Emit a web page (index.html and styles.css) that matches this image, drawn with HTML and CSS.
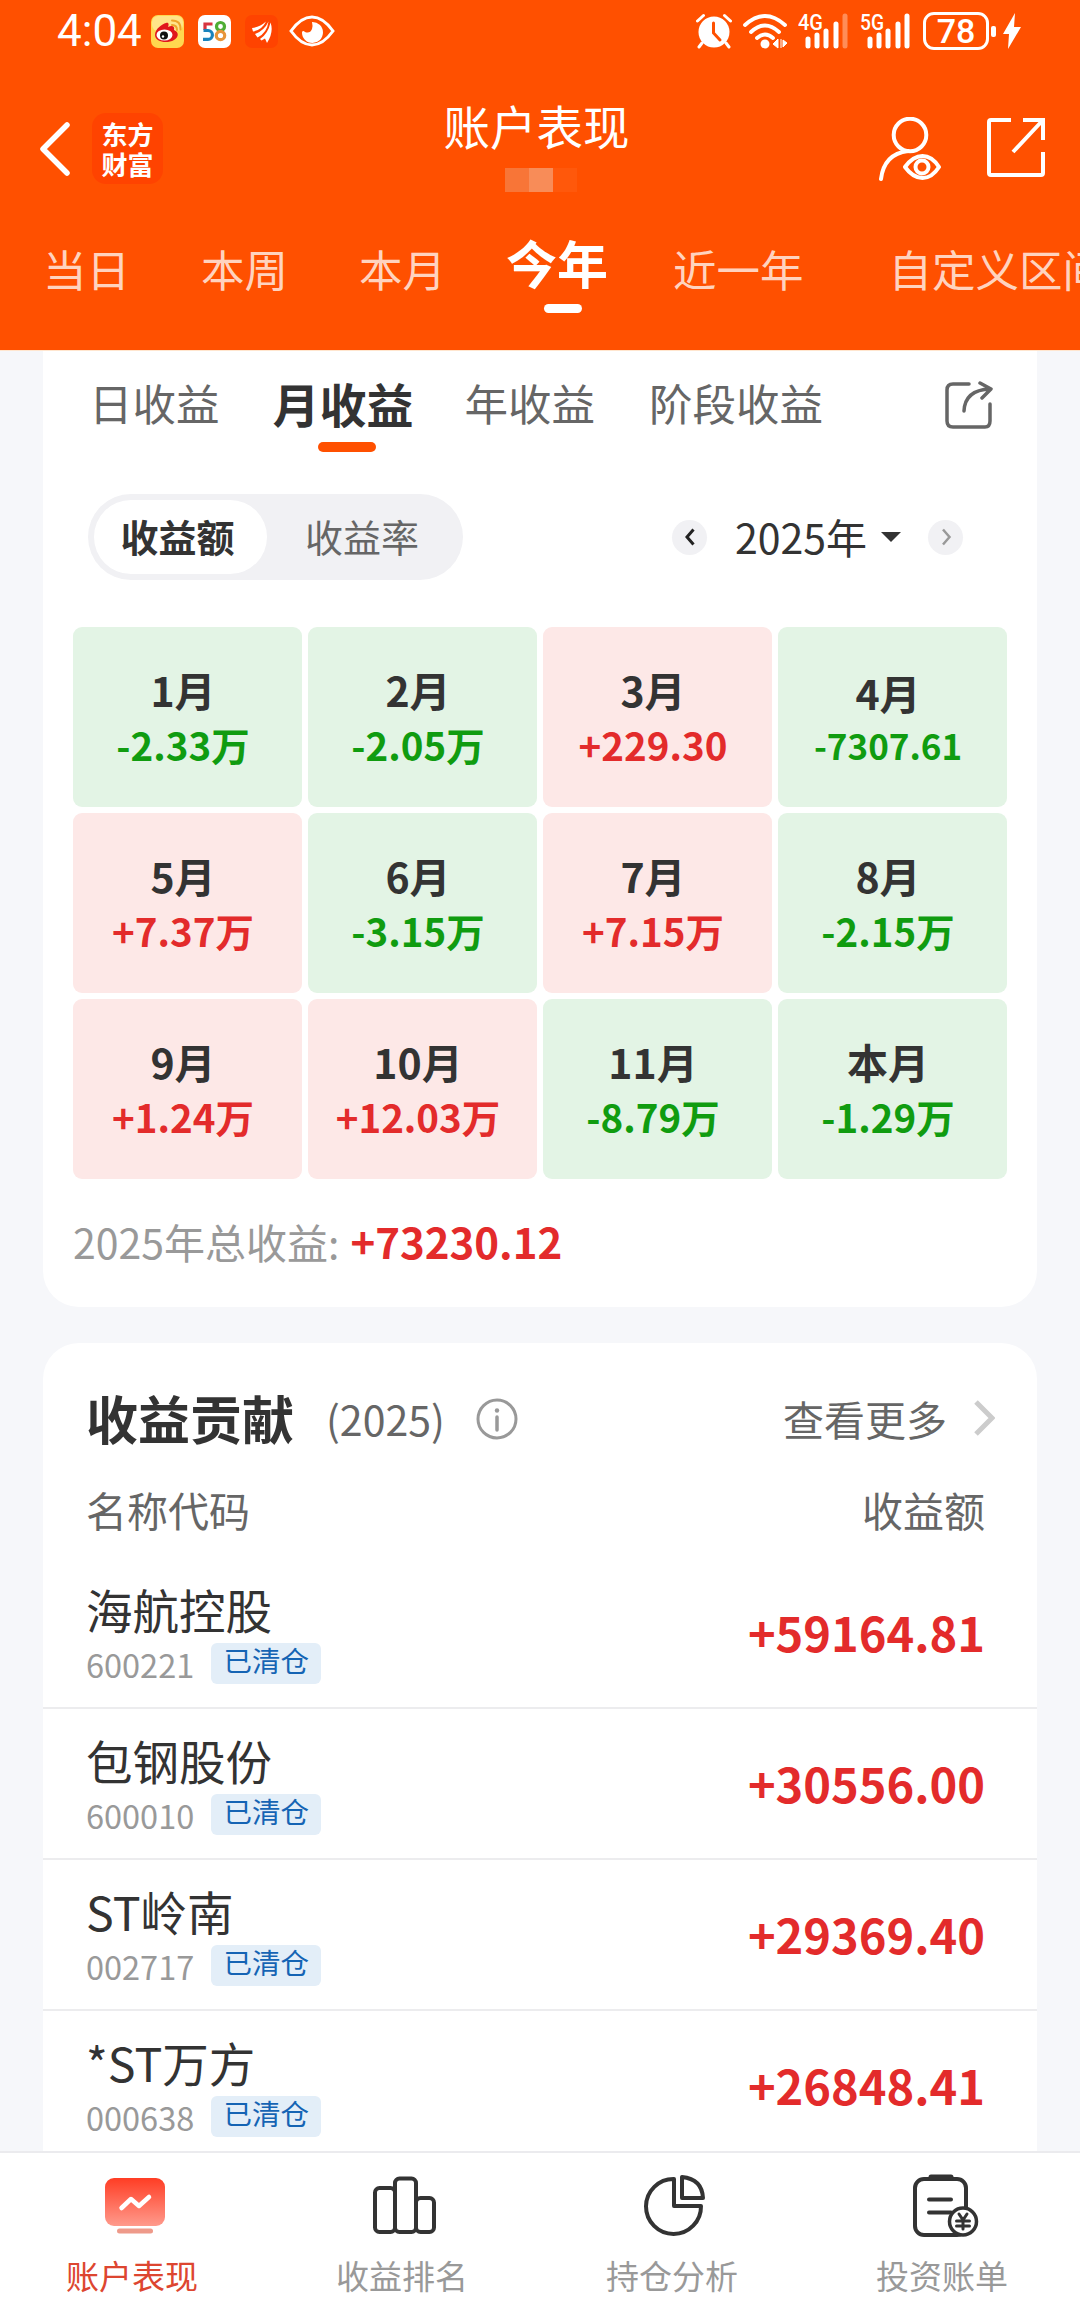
FILE: index.html
```html
<!DOCTYPE html>
<html lang="zh-CN">
<head>
  <meta charset="UTF-8" />
  <meta name="viewport" content="width=device-width, initial-scale=1.0"/>
  <title>账户表现</title>
  <link rel="stylesheet" href="styles.css">
</head>
<body>

  <!-- Header -->
  <header class="header">
    <div class="status-bar">
      <span class="time">4:04</span>
      <svg class="app-icon" viewBox="0 0 33 33" width="33" height="33">
        <rect width="33" height="33" rx="7" fill="#ffd84f"/>
        <rect x="1" y="1" width="31" height="15" rx="6" fill="#ffe48a"/>
        <path d="M4 20C4 14 11 9 15 8c3-1 3 2 2 4 4-2 7-1 6 3 5 2 5 7 0 10-7 4-19 2-19-5z" fill="#e0161c"/>
        <ellipse cx="13.500" cy="20" rx="8" ry="5.500" fill="#fff"/>
        <circle cx="13" cy="20.500" r="4" fill="#111"/>
        <circle cx="12" cy="21.500" r="1.200" fill="#fff"/>
        <path d="M21 10q5 0 5 5M21 5.500q9 0 8.500 9" fill="none" stroke="#efa52a" stroke-width="2" stroke-linecap="round"/>
      </svg>
      <svg class="app-icon" viewBox="0 0 33 33" width="33" height="33">
        <rect width="33" height="33" rx="7" fill="#fff"/>
        <path d="M14.500 9H7v6" fill="none" stroke="#d8343f" stroke-width="3.200"/>
        <path d="M5.500 15.500H10a4 4 0 0 1 0 8.800H5" fill="none" stroke="#1a83bd" stroke-width="3.200"/>
        <circle cx="22.500" cy="11.500" r="4" fill="none" stroke="#4fae35" stroke-width="3.200"/>
        <circle cx="22.500" cy="20.500" r="4.200" fill="none" stroke="#e8953a" stroke-width="3.200"/>
      </svg>
      <svg class="app-icon" viewBox="0 0 33 33" width="33" height="33">
        <rect width="33" height="33" rx="7" fill="#ff4300"/>
        <path d="M7 13Q15 12 21 6.500Q17 15 8 16.500zM10 19Q19 16 23.500 6.500Q22 18 12.500 22.500zM15 24Q23 19 25.500 7.500Q29 17 22 28l-2-4.500-3.500 2z" fill="#fff"/>
      </svg>
      <svg class="eye-icon" viewBox="0 0 46 32" width="46" height="32">
        <path d="M2 16Q12 2 23 2t21 14Q34 30 23 30T2 16z" fill="none" stroke="#fff" stroke-width="3"/>
        <path d="M23 7a10.500 10.500 0 1 1-10 10q1-2 3 0 5 2 7-3 1-3 0-7z" fill="#fff"/>
      </svg>
      <div class="status-right">
        <svg viewBox="0 0 36 36" width="36" height="36">
          <circle cx="18" cy="19" r="15.500" fill="#fff"/>
          <path d="M1.500 8l6-5.500M34.500 8l-6-5.500M6 30l-3 4M30 30l3 4" stroke="#fff" stroke-width="3" stroke-linecap="round"/>
          <path d="M17.500 10v10l6.500 7" fill="none" stroke="#ff5000" stroke-width="3" stroke-linecap="round"/>
        </svg>
        <svg class="wifi" viewBox="0 0 46 36" width="46" height="36">
          <g fill="none" stroke="#fff" stroke-width="3.800" stroke-linecap="round">
            <path d="M3 12Q23-6 43 12M9 19Q23 6 37 19M15 25Q23 18 31 25"/>
          </g>
          <circle cx="23" cy="31" r="4.500" fill="#fff"/>
          <path d="M36 26v9l-5-4zM39 26v9M41 27v7l4-4z" fill="#fff" stroke="#fff"/>
        </svg>
        <svg class="signal" viewBox="0 -8 52 52" width="52" height="52">
          <text x="0" y="17" font-size="22" textLength="25" lengthAdjust="spacingAndGlyphs">4G</text>
          <path d="M10 26v7M19 22v11M28 18v15M38 11v22" stroke="#fff" stroke-width="5" stroke-linecap="round"/>
          <path d="M47 3v30" stroke="#ff8d58" stroke-width="5" stroke-linecap="round"/>
        </svg>
        <svg class="signal" viewBox="0 -8 52 52" width="52" height="52">
          <text x="0" y="17" font-size="22" textLength="24" lengthAdjust="spacingAndGlyphs">5G</text>
          <path d="M10 26v7M19 22v11M28 18v15M38 11v22M47 3v30" stroke="#fff" stroke-width="5" stroke-linecap="round"/>
        </svg>
        <span class="battery">78</span>
        <span class="battery-tip"></span>
        <svg viewBox="0 0 18 36" width="18" height="36"><path d="M12 0L0 21h6L5 36 18 14h-7z" fill="#fff"/></svg>
      </div>
    </div>

    <div class="nav-bar">
      <div class="nav-left">
        <svg viewBox="0 0 30 54" width="30" height="54"><path d="M27 3L3 27l24 24" fill="none" stroke="#fff" stroke-width="5.500" stroke-linecap="round" stroke-linejoin="round"/></svg>
        <div class="logo"><span>东方</span><span>财富</span></div>
      </div>
      <div class="nav-title">
        <h1>账户表现</h1>
        <div class="mosaic"><i></i><i></i><i></i></div>
      </div>
      <div class="nav-right">
        <svg viewBox="0 0 62 64" width="62" height="64" fill="none" stroke="#fff" stroke-width="4">
          <circle cx="31" cy="18" r="16.300"/>
          <path d="M2 62Q5 37 29 34" stroke-linecap="round"/>
          <path d="M26 50Q34 39 43.500 39T60 50Q53 61 43.500 61T26 50z" stroke-linejoin="round"/>
          <circle cx="43" cy="50" r="6.500"/>
        </svg>
        <svg viewBox="0 0 58 60" width="58" height="60" fill="none" stroke="#fff" stroke-width="4">
          <path d="M24 3H4q-2 0-2 2v51q0 2 2 2h50q2 0 2-2V35M36 3h20v20M56 3L26 35"/>
        </svg>
      </div>
    </div>

    <nav class="range-tabs">
      <span>当日</span>
      <span>本周</span>
      <span>本月</span>
      <span class="active">今年</span>
      <span>近一年</span>
      <span>自定义区间</span>
    </nav>
  </header>

  <main class="content">
    <!-- Profit calendar -->
    <section class="card calendar">
      <div class="profit-tabs">
        <span>日收益</span>
        <span class="active">月收益</span>
        <span>年收益</span>
        <span>阶段收益</span>
        <svg viewBox="0 0 48 48" width="48" height="48" fill="none" stroke="#666" stroke-width="3.500" stroke-linecap="round" stroke-linejoin="round">
          <path d="M24 3H8Q2 3 2 9v31q0 6 6 6h32q5 0 5-6V23"/>
          <path d="M19 30Q20 9 45 8M35 2l11 6-9 9"/>
        </svg>
      </div>

      <div class="filter-row">
        <div class="switch">
          <span class="on">收益额</span>
          <span>收益率</span>
        </div>
        <div class="year">
          <span class="round"><svg viewBox="0 0 12 18" width="12" height="18"><path d="M9.500 1.500L3 9l6.500 7.500" fill="none" stroke="#222" stroke-width="3"/></svg></span>
          <span class="year-text">2025年</span>
          <i class="caret"></i>
          <span class="round"><svg viewBox="0 0 12 18" width="12" height="18"><path d="M3 1.500L9.500 9 3 16.500" fill="none" stroke="#999" stroke-width="2.500"/></svg></span>
        </div>
      </div>

      <div class="months">
        <div class="month down"><b>1月</b><em>-2.33万</em></div>
        <div class="month down"><b>2月</b><em>-2.05万</em></div>
        <div class="month up"><b>3月</b><em>+229.30</em></div>
        <div class="month down small"><b>4月</b><em>-7307.61</em></div>
        <div class="month up"><b>5月</b><em>+7.37万</em></div>
        <div class="month down"><b>6月</b><em>-3.15万</em></div>
        <div class="month up"><b>7月</b><em>+7.15万</em></div>
        <div class="month down"><b>8月</b><em>-2.15万</em></div>
        <div class="month up"><b>9月</b><em>+1.24万</em></div>
        <div class="month up"><b>10月</b><em>+12.03万</em></div>
        <div class="month down"><b>11月</b><em>-8.79万</em></div>
        <div class="month down"><b>本月</b><em>-1.29万</em></div>
      </div>

      <div class="total"><span>2025年总收益:</span><b>+73230.12</b></div>
    </section>

    <!-- Contribution list -->
    <section class="card contribution">
      <div class="card-head">
        <h2>收益贡献</h2>
        <span class="sub">(2025)</span>
        <svg class="info" viewBox="0 0 42 42" width="42" height="42">
          <circle cx="21" cy="21" r="19" fill="none" stroke="#999" stroke-width="3"/>
          <path d="M21 19v13" stroke="#999" stroke-width="3.500" stroke-linecap="round"/>
          <circle cx="21" cy="12.500" r="2.200" fill="#999"/>
        </svg>
        <span class="more">查看更多</span>
        <svg viewBox="0 0 22 36" width="22" height="36"><path d="M3 2l16 16L3 34" fill="none" stroke="#ccc" stroke-width="5"/></svg>
      </div>
      <div class="list-head"><span>名称代码</span><span>收益额</span></div>

      <div class="stock">
        <div>
          <div class="name">海航控股</div>
          <div class="code">600221<span class="tag">已清仓</span></div>
        </div>
        <div class="amount">+59164.81</div>
      </div>
      <div class="stock">
        <div>
          <div class="name">包钢股份</div>
          <div class="code">600010<span class="tag">已清仓</span></div>
        </div>
        <div class="amount">+30556.00</div>
      </div>
      <div class="stock">
        <div>
          <div class="name">ST岭南</div>
          <div class="code">002717<span class="tag">已清仓</span></div>
        </div>
        <div class="amount">+29369.40</div>
      </div>
      <div class="stock">
        <div>
          <div class="name">*ST万方</div>
          <div class="code">000638<span class="tag">已清仓</span></div>
        </div>
        <div class="amount">+26848.41</div>
      </div>
    </section>
  </main>

  <!-- Bottom menu -->
  <footer class="tab-bar">
    <div class="tab active">
      <svg viewBox="0 0 68 64" width="68" height="64">
        <defs>
          <linearGradient id="screen" x1="0" y1="0" x2="0" y2="1">
            <stop offset="0" stop-color="#ff3d24"/>
            <stop offset="1" stop-color="#ff9a8c"/>
          </linearGradient>
        </defs>
        <rect x="4" y="4" width="60" height="48" rx="9" fill="url(#screen)"/>
        <path d="M20.500 34L30 25l8 7 10-9" fill="none" stroke="#fff" stroke-width="4.500" stroke-linecap="round" stroke-linejoin="round"/>
        <rect x="16" y="54.500" width="36" height="5" rx="2.500" fill="#ee9a8a"/>
      </svg>
      <span>账户表现</span>
    </div>
    <div class="tab">
      <svg viewBox="0 0 68 64" width="68" height="64" fill="none" stroke="#333" stroke-width="4">
        <rect x="4" y="14" width="20" height="44" rx="4.500"/>
        <rect x="24" y="4.500" width="21" height="53.500" rx="4.500"/>
        <rect x="45" y="24" width="18" height="34" rx="4.500"/>
      </svg>
      <span>收益排名</span>
    </div>
    <div class="tab">
      <svg viewBox="0 0 68 64" width="68" height="64" fill="none" stroke="#333" stroke-width="4" stroke-linejoin="round">
        <path d="M33 5A27.500 27.500 0 1 0 60 32H33z"/>
        <path d="M41 3v21h21Q61 5 41 3z"/>
      </svg>
      <span>持仓分析</span>
    </div>
    <div class="tab">
      <svg viewBox="0 0 68 64" width="68" height="64" fill="none" stroke="#333" stroke-width="4">
        <rect x="4" y="5" width="51" height="56" rx="9"/>
        <path d="M20 3h20" stroke-width="5" stroke-linecap="round"/>
        <path d="M18 25.500h22M18 38.500h22" stroke-linecap="round"/>
        <circle cx="52" cy="47.500" r="13.500" fill="#fff" stroke-width="3.500"/>
        <path d="M48 40l4 6 4-6M52 46v9M45.500 47h13M45.500 52h13" stroke-width="3" stroke-linecap="round"/>
      </svg>
      <span>投资账单</span>
    </div>
  </footer>

</body>
</html>
```

FILE: styles.css
```css
* { box-sizing: border-box; }
body { margin: 0; width: 1080px; height: 2317px; overflow: hidden; display: flex; flex-direction: column; background: #f6f7fa; color: #333; font-family: "Noto Sans CJK SC", "Noto Sans", sans-serif; }
svg { display: block; flex: none; }
span, b, em, h1, h2 { white-space: nowrap; }
em, i { font-style: normal; }

/* header */
.header { flex: none; height: 350px; background: #ff5000; color: #fff; overflow: hidden; }
.status-bar { height: 62px; display: flex; align-items: center; padding: 0 59px 0 57px; }
.time { width: 94px; font-family: Roboto, sans-serif; font-size: 44px; line-height: 60px; }
.app-icon { margin-right: 14px; }
.eye-icon { margin-left: -3px; }
.status-right { margin-left: auto; display: flex; align-items: center; }
.wifi { margin-left: 10px; }
.signal { margin-left: 10px; }
.signal text { fill: #fff; font-family: Roboto, sans-serif; font-weight: 500; }
.battery { width: 66px; height: 38px; margin-left: 11px; border: 3px solid #fff; border-radius: 11px; font: 500 34px/33px Roboto, sans-serif; text-align: center; }
.battery-tip { width: 5px; height: 11px; margin: 0 7px 0 2px; background: #fff; border-radius: 2px; }

.nav-bar { height: 160px; display: flex; padding: 0 35px 0 40px; }
.nav-left { flex: 1; display: flex; align-items: center; height: 71px; margin-top: 51px; }
.logo { width: 71px; height: 71px; margin-left: 22px; display: flex; flex-direction: column; align-items: center; justify-content: center; gap: 4px; background: #ff4300; border-radius: 14px; font-size: 26px; line-height: 26px; font-weight: bold; }
.nav-title { width: 188px; margin-right: 10px; padding-top: 32px; }
.nav-title h1 { margin: 0; font-size: 46.500px; line-height: 62px; font-weight: normal; }
.mosaic { display: flex; margin: 12px 0 0 61px; }
.mosaic i { width: 24px; height: 24px; background: #f87537; }
.mosaic i:nth-child(2) { background: #f88c58; }
.mosaic i:nth-child(3) { background: #ff580b; }
.nav-right { flex: 1; display: flex; justify-content: flex-end; gap: 46px; padding-top: 55px; }

.range-tabs { display: flex; padding-left: 43px; height: 128px; font-size: 43.500px; line-height: 64px; color: #ffd3bf; }
.range-tabs span { margin: 15px 71px 0 0; }
.range-tabs span:nth-child(5) { margin-right: 85px; }
.range-tabs .active { position: relative; margin: 8px 65px 0 -11px; font-size: 51px; font-weight: bold; color: #fff; }
.range-tabs .active::after { content: ""; position: absolute; left: 38px; top: 74px; width: 38px; height: 9px; border-radius: 5px; background: #fff; }

/* cards */
.content { flex: 1; min-height: 0; overflow: hidden; padding: 0 43px; border-top: 1px solid #ffe6cf; }
.card { background: #fff; border-radius: 36px; }
.calendar { height: 956px; padding: 0 30px; border-radius: 0 0 36px 36px; }

.profit-tabs { display: flex; height: 143px; padding: 20px 14px 0 16px; font-size: 43.500px; line-height: 64px; color: #666; }
.profit-tabs span { margin-right: 54px; }
.profit-tabs .active { position: relative; margin: 0 51px 0 -1px; font-size: 47px; font-weight: bold; color: #333; }
.profit-tabs .active::after { content: ""; position: absolute; left: 45px; top: 71px; width: 58px; height: 10px; border-radius: 5px; background: #ff5000; }
.profit-tabs svg { margin: 10px 0 0 auto; }

.filter-row { display: flex; justify-content: space-between; align-items: center; height: 86px; padding: 0 44px 0 15px; }
.switch { display: flex; width: 375px; height: 86px; padding: 6px; background: #f1f1f4; border-radius: 43px; font-size: 38px; line-height: 71px; color: #666; }
.switch span { width: 192px; text-align: center; }
.switch .on { width: 175px; padding-right: 8px; padding-left: 2px; background: #fff; border-radius: 37px; font-weight: bold; color: #333; }
.year { display: flex; align-items: center; }
.round { width: 35px; height: 35px; border-radius: 50%; background: #f1f1f4; display: flex; align-items: center; justify-content: center; }
.year-text { width: 146px; margin-left: 28px; font-size: 41px; line-height: 60px; margin-top: -2px; }
.caret { margin-right: 27px; border: 10px solid transparent; border-top-color: #333; border-bottom: 0; }

.months { display: grid; grid-template-columns: repeat(4, 229px); grid-auto-rows: 180px; gap: 6px; margin-top: 47px; }
.month { display: flex; flex-direction: column; align-items: center; padding: 34px 9px 0 0; border-radius: 9px; }
.month b { font-size: 41px; line-height: 56px; }
.month em { font-size: 38.500px; line-height: 54px; font-weight: bold; }
.month.small { padding-top: 37px; }
.month.small em { font-size: 35px; line-height: 50px; }
.up { background: #fde8e7; }
.down { background: #e3f4e5; }
.up em { color: #e32b2b; }
.down em { color: #109c10; }

.total { display: flex; margin-top: 32px; font-size: 41px; line-height: 60px; color: #999; }
.total b { margin-left: 11px; font-size: 42px; color: #e32b2b; }

.contribution { height: 900px; margin-top: 36px; }
.card-head { display: flex; align-items: center; height: 150px; padding: 0 42px 0 43px; }
.card-head h2 { margin: 0; font-size: 52px; line-height: 74px; }
.card-head .sub { margin-left: 32px; font-size: 41px; color: #666; }
.card-head .info { margin: 2px 0 0 31px; }
.card-head .more { margin-left: auto; margin-right: 26px; font-size: 41px; color: #666; }
.list-head { display: flex; justify-content: space-between; height: 65px; padding: 0 52px 0 43px; font-size: 41px; line-height: 32px; color: #666; }

.stock { display: flex; justify-content: space-between; height: 151px; padding: 0 52px 0 43px; border-bottom: 2px solid #ececee; }
.stock .name { padding-top: 20px; font-size: 46.500px; line-height: 62px; }
.code { display: flex; align-items: center; height: 46px; font-size: 32.500px; color: #999; }
.tag { width: 110px; height: 41px; margin-left: 17px; border-radius: 6px; background: #e3eef8; font-size: 28.500px; line-height: 34px; text-align: center; color: #1564b4; }
.amount { padding-top: 40px; font-size: 47px; line-height: 68px; font-weight: bold; color: #e32b2b; }

/* bottom menu */
.tab-bar { flex: none; height: 166px; display: flex; background: #fff; border-top: 2px solid #ebebee; }
.tab { width: 270px; padding-top: 21px; display: flex; flex-direction: column; align-items: center; font-size: 33px; color: #999; }
.tab span { margin: 13px 6px 0 0; line-height: 48px; }
.tab.active { color: #dd4630; }
```
